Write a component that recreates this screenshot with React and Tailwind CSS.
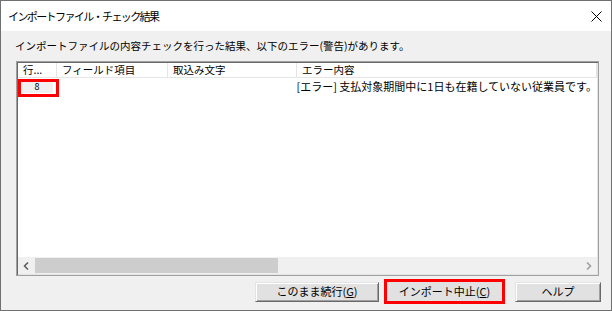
const font = { fontFamily: '"Noto Sans CJK JP", "Noto Sans", sans-serif' }

const columns = [
  { label: '行...', w: 'w-[39px]' },
  { label: 'フィールド項目', w: 'w-[111px]' },
  { label: '取込み文字', w: 'w-[129px]' },
  { label: 'エラー内容', w: 'flex-1' },
]

function Btn({ children, className = '' }) {
  return (
    <button
      className={`h-[20px] bg-[#e1e1e1] border border-t-[#e3e3e3] border-l-[#e3e3e3] border-r-[#696969] border-b-[#696969] shadow-[inset_1px_1px_0_#ffffff,inset_-1px_-1px_0_#a0a0a0] text-[11px] leading-none text-black flex items-center justify-center ${className}`}
    >
      {children}
    </button>
  )
}

export default function App() {
  return (
    <div className="w-[612px] h-[311px] border border-[#707070] bg-[#f0f0f0] flex flex-col overflow-hidden text-black" style={font}>
      {/* title bar */}
      <div className="h-[30px] bg-white flex items-center justify-between pl-[7px] pr-[9px] shrink-0">
        <span className="text-[11px] tracking-[-1.6px]">インポートファイル・チェック結果</span>
        <svg width="11" height="11" viewBox="0 0 11 11" stroke="#000" strokeWidth="1">
          <line x1="0.5" y1="0.5" x2="10.5" y2="10.5" />
          <line x1="10.5" y1="0.5" x2="0.5" y2="10.5" />
        </svg>
      </div>

      <div className="flex-1 flex flex-col px-[14px] pt-[9px] pb-[6px]">
        <p className="text-[10.5px] leading-[12px]">
          インポートファイルの内容チェックを行った結果、以下のエラー(警告)があります。
        </p>

        {/* list view */}
        <div className="relative mt-[9px] ml-[1px] w-[583px] h-[215px] border border-[#a0a0a0] shadow-[inset_1px_1px_0_#696969,inset_-1px_-1px_0_#e3e3e3] bg-white flex flex-col p-[1px]">
          <div className="flex h-[15px] border-b border-[#e5e5e5] text-[10.5px] leading-[14px]">
            {columns.map((c) => (
              <div key={c.label} className={`${c.w} border-r border-[#e5e5e5] pl-[5px] whitespace-nowrap overflow-hidden`}>
                {c.label}
              </div>
            ))}
          </div>
          <div className="flex h-[16px] text-[11px] leading-[16px]">
            <div className="w-[39px] flex justify-center">
              <span className="w-[31px] bg-[#f0f0f0] text-center mt-[2px] h-[13px] leading-[13px] text-[9px]">8</span>
            </div>
            <div className="w-[111px]" />
            <div className="w-[129px]" />
            <div className="flex-1 pl-[5px] whitespace-nowrap">
              [エラー] 支払対象期間中に1日も在籍していない従業員です。
            </div>
          </div>
          <div className="flex-1" />
          {/* horizontal scrollbar */}
          <div className="h-[17px] flex bg-[#f0f0f0]">
            <div className="w-[17px] flex items-center justify-center">
              <svg width="7" height="8" viewBox="0 0 7 8" fill="none" stroke="#606060" strokeWidth="1.6">
                <polyline points="5,0.5 1.5,4 5,7.5" />
              </svg>
            </div>
            <div className="w-[243px] my-[1px] bg-[#cdcdcd]" />
            <div className="flex-1" />
            <div className="w-[17px] flex items-center justify-center">
              <svg width="7" height="8" viewBox="0 0 7 8" fill="none" stroke="#a0a0a0" strokeWidth="1.6">
                <polyline points="2,0.5 5.5,4 2,7.5" />
              </svg>
            </div>
          </div>

          {/* annotation */}
          <div className="absolute left-[1px] top-[17px] w-[41px] h-[18px] border-[3px] border-[#ff0000]" />
        </div>

        {/* buttons */}
        <div className="mt-auto flex items-center justify-end mr-[-4px]">
          <Btn className="w-[124px]">
            このまま続行(<span className="underline">G</span>)
          </Btn>
          <div className="ml-[5px] w-[121px] h-[25px] border-[3px] border-[#ff0000] bg-[#e1e1e1] flex items-center justify-center text-[11px] leading-none">
            インポート中止(<span className="underline">C</span>)
          </div>
          <Btn className="ml-[10px] w-[86px]">ヘルプ</Btn>
        </div>
      </div>
    </div>
  )
}
